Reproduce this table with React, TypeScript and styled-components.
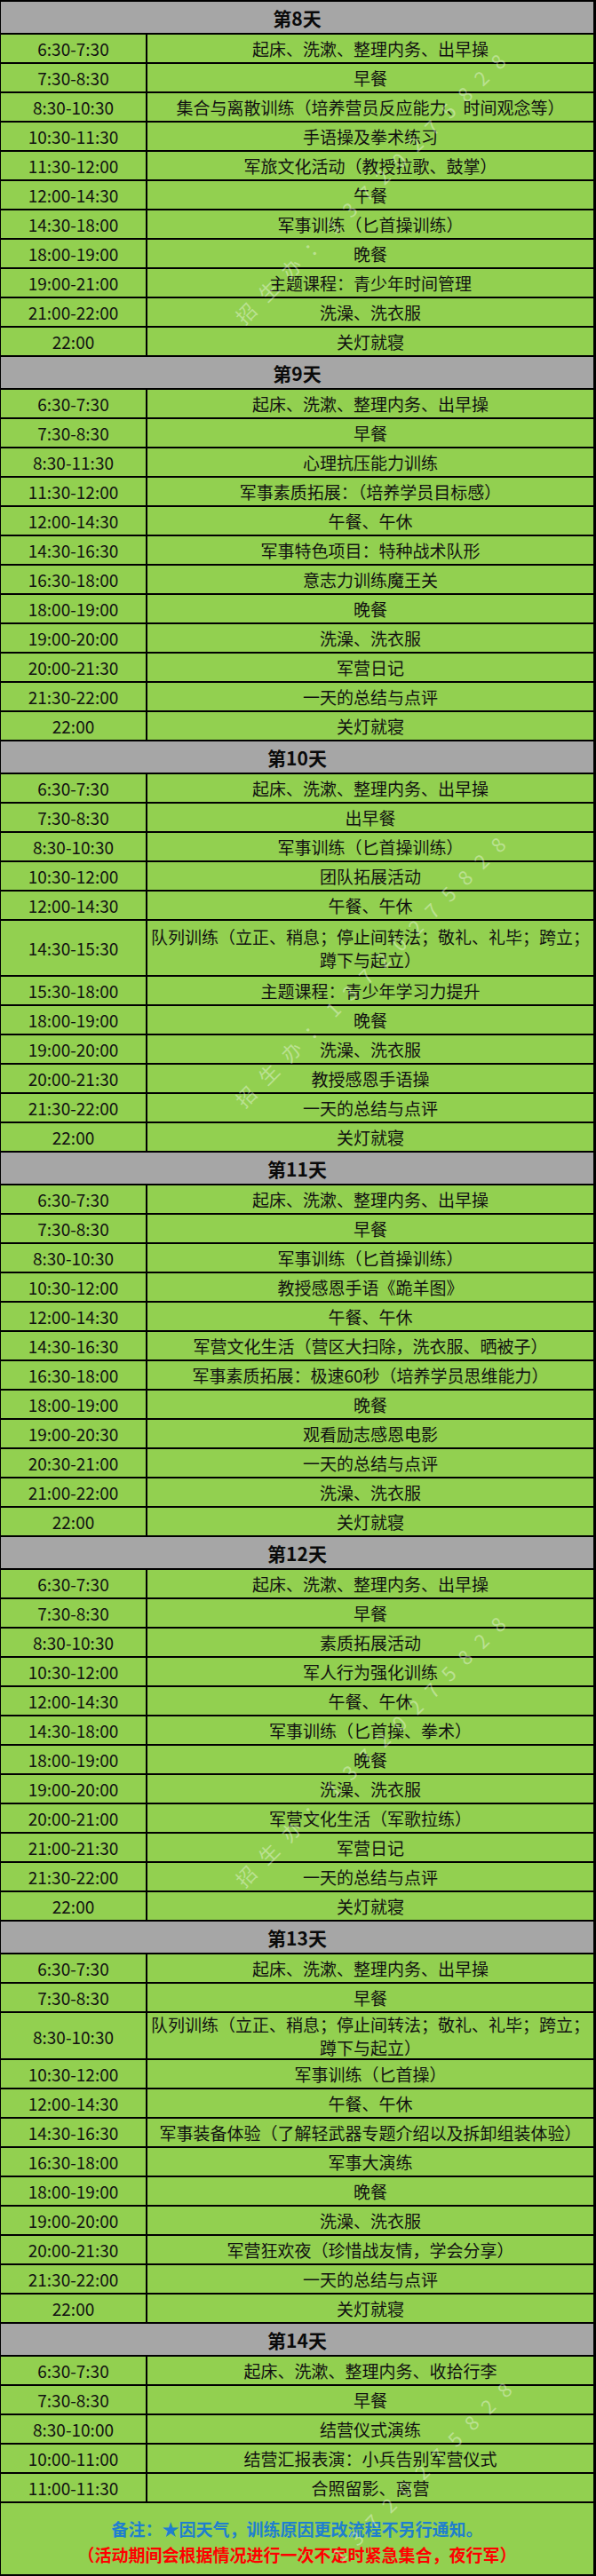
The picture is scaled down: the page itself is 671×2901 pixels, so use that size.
import React from 'react';
import styled, { createGlobalStyle } from 'styled-components';

const GlobalStyle = createGlobalStyle`
  html, body { margin: 0; padding: 0; background: #ffffff; }
  body { font-family: "Noto Sans CJK SC", "Noto Sans", sans-serif; }
`;

const Sheet = styled.div`
  position: relative;
  width: 671px;
  box-sizing: border-box;
  border-top: 2px solid #000;
  border-left: 1px solid #000;
  border-right: 3px solid #000;
  overflow: hidden;
  font-family: "Noto Sans CJK SC", "Noto Sans", sans-serif;
  color: #111;
`;

const DayHeader = styled.div`
  height: 35px;
  border-bottom: 2px solid #000;
  background: #a6a6a6;
  display: flex;
  align-items: center;
  justify-content: center;
  font-size: 21px;
  font-weight: 700;
  color: #0a0a0a;
`;

const Row = styled.div<{ $h: number }>`
  display: grid;
  grid-template-columns: 165px 1fr;
  height: ${(p) => p.$h - 2}px;
  border-bottom: 2px solid #000;
  background: #92d050;
`;

const TimeCell = styled.div`
  border-right: 2px solid #000;
  display: flex;
  align-items: center;
  justify-content: center;
  font-size: 19px;
  line-height: 1;
`;

const ActCell = styled.div`
  display: flex;
  align-items: center;
  justify-content: center;
  text-align: center;
  padding: 0 2px;
  font-size: 19px;
  line-height: 26px;
`;

const Note = styled.div`
  height: 75px;
  padding-top: 5px;
  border-bottom: 2px solid #000;
  background: #92d050;
  display: flex;
  flex-direction: column;
  align-items: center;
  justify-content: center;
  font-size: 19px;
  font-weight: 700;
  line-height: 29px;
`;

const NoteLine = styled.div<{ $color: string }>`
  color: ${(p) => p.$color};
`;

const Watermark = styled.div<{ $x: number; $y: number }>`
  position: absolute;
  left: ${(p) => p.$x}px;
  top: ${(p) => p.$y}px;
  transform: translate(-50%, -50%) rotate(-45deg);
  white-space: nowrap;
  pointer-events: none;
  font-size: 22px;
  letter-spacing: 14px;
  color: rgba(255, 255, 255, 0.38);
  font-family: "Noto Sans CJK SC", "Noto Sans", sans-serif;
`;

type Item = [string, string, number?];
type Day = { title: string; rows: Item[] };

const days: Day[] = [
  {
    title: '第8天',
    rows: [
      ['6:30-7:30', '起床、洗漱、整理内务、出早操'],
      ['7:30-8:30', '早餐'],
      ['8:30-10:30', '集合与离散训练（培养营员反应能力、时间观念等）'],
      ['10:30-11:30', '手语操及拳术练习'],
      ['11:30-12:00', '军旅文化活动（教授拉歌、鼓掌）'],
      ['12:00-14:30', '午餐'],
      ['14:30-18:00', '军事训练（匕首操训练）'],
      ['18:00-19:00', '晚餐'],
      ['19:00-21:00', '主题课程：青少年时间管理'],
      ['21:00-22:00', '洗澡、洗衣服'],
      ['22:00', '关灯就寝'],
    ],
  },
  {
    title: '第9天',
    rows: [
      ['6:30-7:30', '起床、洗漱、整理内务、出早操'],
      ['7:30-8:30', '早餐'],
      ['8:30-11:30', '心理抗压能力训练'],
      ['11:30-12:00', '军事素质拓展：（培养学员目标感）'],
      ['12:00-14:30', '午餐、午休'],
      ['14:30-16:30', '军事特色项目：特种战术队形'],
      ['16:30-18:00', '意志力训练魔王关'],
      ['18:00-19:00', '晚餐'],
      ['19:00-20:00', '洗澡、洗衣服'],
      ['20:00-21:30', '军营日记'],
      ['21:30-22:00', '一天的总结与点评'],
      ['22:00', '关灯就寝'],
    ],
  },
  {
    title: '第10天',
    rows: [
      ['6:30-7:30', '起床、洗漱、整理内务、出早操'],
      ['7:30-8:30', '出早餐'],
      ['8:30-10:30', '军事训练（匕首操训练）'],
      ['10:30-12:00', '团队拓展活动'],
      ['12:00-14:30', '午餐、午休'],
      ['14:30-15:30', '队列训练（立正、稍息；停止间转法；敬礼、礼毕；跨立；蹲下与起立）', 63],
      ['15:30-18:00', '主题课程：青少年学习力提升'],
      ['18:00-19:00', '晚餐'],
      ['19:00-20:00', '洗澡、洗衣服'],
      ['20:00-21:30', '教授感恩手语操'],
      ['21:30-22:00', '一天的总结与点评'],
      ['22:00', '关灯就寝'],
    ],
  },
  {
    title: '第11天',
    rows: [
      ['6:30-7:30', '起床、洗漱、整理内务、出早操'],
      ['7:30-8:30', '早餐'],
      ['8:30-10:30', '军事训练（匕首操训练）'],
      ['10:30-12:00', '教授感恩手语《跪羊图》'],
      ['12:00-14:30', '午餐、午休'],
      ['14:30-16:30', '军营文化生活（营区大扫除，洗衣服、晒被子）'],
      ['16:30-18:00', '军事素质拓展：极速60秒（培养学员思维能力）'],
      ['18:00-19:00', '晚餐'],
      ['19:00-20:30', '观看励志感恩电影'],
      ['20:30-21:00', '一天的总结与点评'],
      ['21:00-22:00', '洗澡、洗衣服'],
      ['22:00', '关灯就寝'],
    ],
  },
  {
    title: '第12天',
    rows: [
      ['6:30-7:30', '起床、洗漱、整理内务、出早操'],
      ['7:30-8:30', '早餐'],
      ['8:30-10:30', '素质拓展活动'],
      ['10:30-12:00', '军人行为强化训练'],
      ['12:00-14:30', '午餐、午休'],
      ['14:30-18:00', '军事训练（匕首操、拳术）'],
      ['18:00-19:00', '晚餐'],
      ['19:00-20:00', '洗澡、洗衣服'],
      ['20:00-21:00', '军营文化生活（军歌拉练）'],
      ['21:00-21:30', '军营日记'],
      ['21:30-22:00', '一天的总结与点评'],
      ['22:00', '关灯就寝'],
    ],
  },
  {
    title: '第13天',
    rows: [
      ['6:30-7:30', '起床、洗漱、整理内务、出早操'],
      ['7:30-8:30', '早餐'],
      ['8:30-10:30', '队列训练（立正、稍息；停止间转法；敬礼、礼毕；跨立；蹲下与起立）', 53],
      ['10:30-12:00', '军事训练（匕首操）'],
      ['12:00-14:30', '午餐、午休'],
      ['14:30-16:30', '军事装备体验（了解轻武器专题介绍以及拆卸组装体验）'],
      ['16:30-18:00', '军事大演练'],
      ['18:00-19:00', '晚餐'],
      ['19:00-20:00', '洗澡、洗衣服'],
      ['20:00-21:30', '军营狂欢夜（珍惜战友情，学会分享）'],
      ['21:30-22:00', '一天的总结与点评'],
      ['22:00', '关灯就寝'],
    ],
  },
  {
    title: '第14天',
    rows: [
      ['6:30-7:30', '起床、洗漱、整理内务、收拾行李'],
      ['7:30-8:30', '早餐'],
      ['8:30-10:00', '结营仪式演练'],
      ['10:00-11:00', '结营汇报表演：小兵告别军营仪式'],
      ['11:00-11:30', '合照留影、离营'],
    ],
  },
];

const marks: { x: number; y: number; text: string }[] = [
  { x: 420, y: 205, text: '招生办：13720275828' },
  { x: 420, y: 1087, text: '招生办：13720275828' },
  { x: 420, y: 1965, text: '招生办：13720275828' },
  { x: 478, y: 2776, text: '13720275828' },
];

export default function App() {
  return (
    <>
      <GlobalStyle />
      <Sheet>
        {days.map((day) => (
          <React.Fragment key={day.title}>
            <DayHeader>{day.title}</DayHeader>
            {day.rows.map(([time, act, h], i) => (
              <Row key={day.title + i} $h={h ?? 33}>
                <TimeCell>{time}</TimeCell>
                <ActCell>{act}</ActCell>
              </Row>
            ))}
          </React.Fragment>
        ))}
        <Note>
          <NoteLine $color="#1f7fcf">备注：★因天气，训练原因更改流程不另行通知。</NoteLine>
          <NoteLine $color="#ff0000">（活动期间会根据情况进行一次不定时紧急集合，夜行军）</NoteLine>
        </Note>
        {marks.map((m) => (
          <Watermark key={m.y} $x={m.x} $y={m.y}>
            {m.text}
          </Watermark>
        ))}
      </Sheet>
    </>
  );
}
